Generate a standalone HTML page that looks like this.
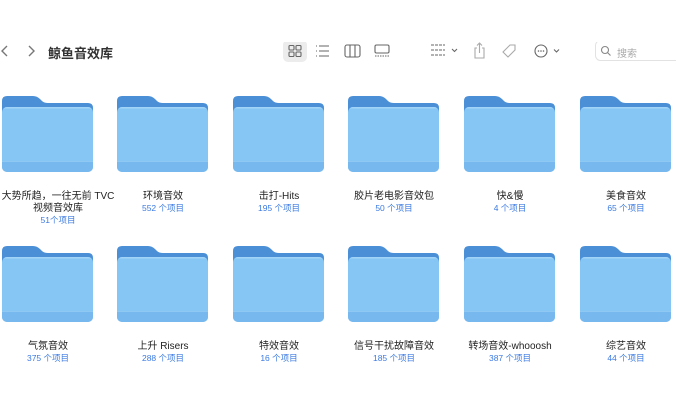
<!DOCTYPE html>
<html><head><meta charset="utf-8"><style>
body{margin:0;width:676px;height:418px;background:#fff;position:relative;overflow:hidden;font-family:"Liberation Sans","Noto Sans CJK SC",sans-serif;}
.a{position:absolute}
.f{position:absolute;width:92px;height:80px}
.n{position:absolute;width:116px;text-align:center;font-size:10px;color:#222;line-height:12px}
.c{color:#3b7ae0;font-size:8.5px;line-height:11px}
</style></head><body>
<svg class="a" style="left:0;top:42px" width="676" height="22">
<path d="M7 4 L2 9 L7 14" fill="none" stroke="#777" stroke-width="1.4"/>
<path d="M29 4 L34 9 L29 14" fill="none" stroke="#777" stroke-width="1.4"/>
<rect x="283" y="-2" width="24" height="22" rx="5" fill="#ececec"/>
<g fill="none" stroke="#666" stroke-width="1.1">
<rect x="289" y="3.5" width="5" height="4.5" rx="1"/><rect x="296" y="3.5" width="5" height="4.5" rx="1"/><rect x="289" y="10" width="5" height="4.5" rx="1"/><rect x="296" y="10" width="5" height="4.5" rx="1"/>
<path d="M316 4h1M316 9h1M316 14h1M319 4h10M319 9h10M319 14h10"/>
<rect x="345" y="3" width="15" height="12" rx="2"/><path d="M350 3v12M355 3v12"/>
<rect x="375" y="3" width="14" height="8" rx="1.5"/><path d="M375 14h14" stroke-dasharray="1.5 1"/>
<path d="M431 3h14M431 8h14M431 13h14" stroke-dasharray="3 1"/>
<path d="M452 7l2.5 2.5 2.5-2.5"/>
<path d="M477 6l-2 0v10h9V6h-2M479.5 11V1M477 3.5L479.5 1l2.5 2.5" stroke="#aaa"/>
<path d="M503 10l7-7h5v5l-7 7z" stroke="#aaa"/>
<circle cx="541" cy="9" r="6"/><path d="M554 7.5l2.5 2.5 2.5-2.5"/>
</g>
<circle cx="538.5" cy="9" r=".8" fill="#666"/><circle cx="541" cy="9" r=".8" fill="#666"/><circle cx="543.5" cy="9" r=".8" fill="#666"/>
<rect x="595.5" y="-1.5" width="90" height="20" rx="5" fill="#fff" stroke="#e2e2e2"/>
<circle cx="605" cy="8" r="3.5" fill="none" stroke="#888" stroke-width="1.1"/><path d="M607.5 10.5l3 3" stroke="#888" stroke-width="1.1"/>
</svg>
<div class="a" style="left:48px;top:43px;font-size:13px;font-weight:bold;color:#333">鲸鱼音效库</div>
<div class="a" style="left:617px;top:45px;font-size:10px;color:#aaa">搜索</div>
<svg width="0" height="0" style="position:absolute"><defs>
<clipPath id="cp"><rect x="0" y="12" width="91" height="65" rx="5"/></clipPath>
<g id="fd">
<path d="M5 1H31Q35 1 38 4L40 6Q42 8 46 8H86Q91 8 91 13V40H0V6Q0 1 5 1Z" fill="#4b8fd6"/>
<g clip-path="url(#cp)">
<rect x="0" y="12" width="91" height="65" fill="#86c6f4"/>
<rect x="0" y="12" width="91" height="1.5" fill="#a2d4f8"/>
<rect x="0" y="66" width="91" height="12" fill="#77b8ee"/>
<rect x="0" y="66" width="91" height="1" fill="#8ec8f3"/>
</g>
</g></defs></svg>
<svg class="f" style="left:2px;top:95px"><use href="#fd"/></svg>
<svg class="f" style="left:117px;top:95px"><use href="#fd"/></svg>
<svg class="f" style="left:233px;top:95px"><use href="#fd"/></svg>
<svg class="f" style="left:348px;top:95px"><use href="#fd"/></svg>
<svg class="f" style="left:464px;top:95px"><use href="#fd"/></svg>
<svg class="f" style="left:580px;top:95px"><use href="#fd"/></svg>
<svg class="f" style="left:2px;top:245px"><use href="#fd"/></svg>
<svg class="f" style="left:117px;top:245px"><use href="#fd"/></svg>
<svg class="f" style="left:233px;top:245px"><use href="#fd"/></svg>
<svg class="f" style="left:348px;top:245px"><use href="#fd"/></svg>
<svg class="f" style="left:464px;top:245px"><use href="#fd"/></svg>
<svg class="f" style="left:580px;top:245px"><use href="#fd"/></svg>
<div class="n" style="left:-12px;top:191px;width:140px">大势所趋，一往无前 TVC<br>视频音效库<div class="c">51个项目</div></div>
<div class="n" style="left:105px;top:191px">环境音效<div class="c">552 个项目</div></div>
<div class="n" style="left:221px;top:191px">击打-Hits<div class="c">195 个项目</div></div>
<div class="n" style="left:336px;top:191px">胶片老电影音效包<div class="c">50 个项目</div></div>
<div class="n" style="left:452px;top:191px">快&amp;慢<div class="c">4 个项目</div></div>
<div class="n" style="left:568px;top:191px">美食音效<div class="c">65 个项目</div></div>
<div class="n" style="left:-10px;top:341px">气氛音效<div class="c">375 个项目</div></div>
<div class="n" style="left:105px;top:341px">上升 Risers<div class="c">288 个项目</div></div>
<div class="n" style="left:221px;top:341px">特效音效<div class="c">16 个项目</div></div>
<div class="n" style="left:336px;top:341px">信号干扰故障音效<div class="c">185 个项目</div></div>
<div class="n" style="left:452px;top:341px">转场音效-whooosh<div class="c">387 个项目</div></div>
<div class="n" style="left:568px;top:341px">综艺音效<div class="c">44 个项目</div></div>
</body></html>
